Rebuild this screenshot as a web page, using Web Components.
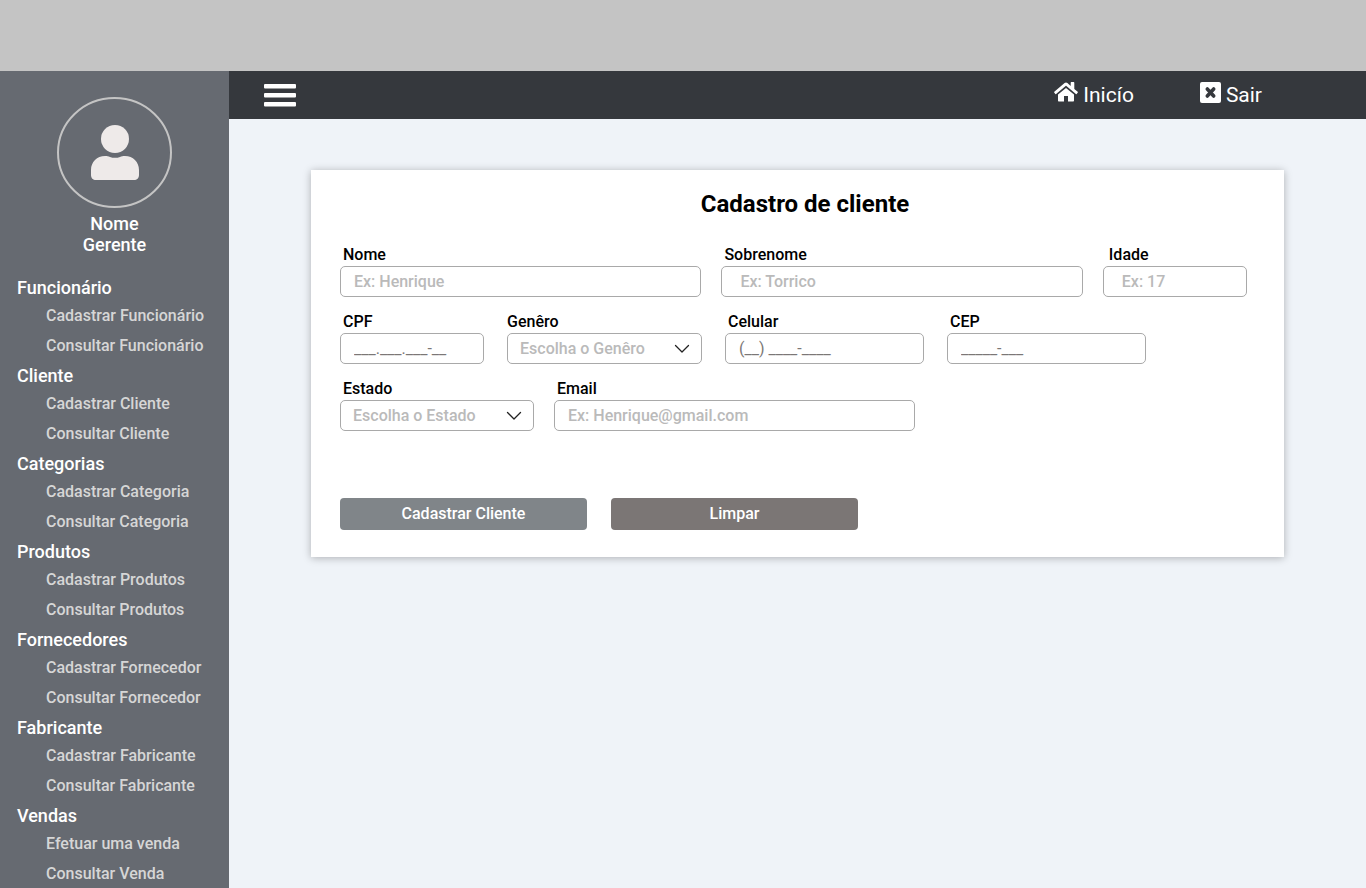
<!DOCTYPE html>
<html lang="pt-BR">
<head>
<meta charset="utf-8">
<meta name="viewport" content="width=device-width, initial-scale=1">
<title>Cadastro de cliente</title>
<style>
  html, body { height: 100%; }
  body {
    margin: 0;
    background: #eff3f8;
    color: #000;
    font: 500 16px/20px Roboto, "Liberation Sans", sans-serif;
  }
</style>
</head>
<body>
<app-shell>
  <side-menu slot="menu" name="Nome" role-name="Gerente">
    <menu-group heading="Funcionário" items="Cadastrar Funcionário|Consultar Funcionário"></menu-group>
    <menu-group heading="Cliente" items="Cadastrar Cliente|Consultar Cliente"></menu-group>
    <menu-group heading="Categorias" items="Cadastrar Categoria|Consultar Categoria"></menu-group>
    <menu-group heading="Produtos" items="Cadastrar Produtos|Consultar Produtos"></menu-group>
    <menu-group heading="Fornecedores" items="Cadastrar Fornecedor|Consultar Fornecedor"></menu-group>
    <menu-group heading="Fabricante" items="Cadastrar Fabricante|Consultar Fabricante"></menu-group>
    <menu-group heading="Vendas" items="Efetuar uma venda|Consultar Venda"></menu-group>
  </side-menu>
  <top-bar slot="bar"></top-bar>
  <form-card heading="Cadastro de cliente">
    <form-row layout="names">
      <form-field label="Nome" placeholder="Ex: Henrique"></form-field>
      <form-field label="Sobrenome" placeholder="Ex: Torrico" inset></form-field>
      <form-field label="Idade" placeholder="Ex: 17" inset indent></form-field>
    </form-row>
    <form-row layout="documents">
      <form-field label="CPF" placeholder="___.___.___-__" mask></form-field>
      <select-field label="Genêro" placeholder="Escolha o Genêro" options="Feminino|Masculino|Outro" flush></select-field>
      <form-field label="Celular" placeholder="(__) ____-____" mask></form-field>
      <form-field label="CEP" placeholder="_____-___" mask></form-field>
    </form-row>
    <form-row layout="contact">
      <select-field label="Estado" placeholder="Escolha o Estado" options="Paraná|Rio de Janeiro|São Paulo"></select-field>
      <form-field label="Email" type="email" placeholder="Ex: Henrique@gmail.com"></form-field>
    </form-row>
    <action-button slot="actions">Cadastrar Cliente</action-button>
    <action-button slot="actions" tone="muted">Limpar</action-button>
  </form-card>
</app-shell>

<script>
class BaseElement extends HTMLElement {
  connectedCallback() {
    if (this.shadowRoot) return;
    const template = document.createElement('template');
    template.innerHTML = '<style>*{box-sizing:border-box}</style>' + this.render();
    this.attachShadow({ mode: 'open' }).append(template.content.cloneNode(true));
  }
  attr(name, fallback = '') { return this.getAttribute(name) || fallback; }
  list(name) { return this.attr(name).split('|').filter(Boolean); }
}

customElements.define('app-shell', class extends BaseElement {
  render() {
    return `<style>
      :host { display: flex; flex-direction: column; height: 100vh; }
      .banner { flex: none; height: 71px; background: #c4c4c4; }
      .body { flex: 1; display: flex; min-height: 0; }
      .content { flex: 1; display: flex; flex-direction: column; min-width: 0; overflow-y: auto; }
      main { padding: 51px 82px; }
    </style>
    <div class="banner"></div>
    <div class="body">
      <slot name="menu"></slot>
      <div class="content"><slot name="bar"></slot><main><slot></slot></main></div>
    </div>`;
  }
});

customElements.define('side-menu', class extends BaseElement {
  render() {
    return `<style>
      :host { display: block; flex: none; box-sizing: border-box; width: 229px; background: #666a71;
              color: #fff; padding-top: 26px; overflow-y: auto; scrollbar-width: none; }
      .profile { display: flex; flex-direction: column; align-items: center; gap: 5px;
                 text-align: center; font-size: 18px; line-height: 21px; margin-bottom: 20px; }
      .profile svg { display: block; }
      p { margin: 0; }
      nav { display: grid; gap: 2px; }
    </style>
    <div class="profile">
      <svg width="115" height="111" viewBox="0 0 115 111" aria-hidden="true">
        <ellipse cx="57.5" cy="55.5" rx="56.5" ry="54.5" fill="none" stroke="#c4c4c4" stroke-width="2"/>
        <g fill="#eeeae9">
          <circle cx="58" cy="42" r="14"/>
          <path d="M48 59c2 0 3.500 .3 5 .9 3 1.200 7 1.200 10 0 1.500-.6 3-.9 5-.9 8 0 14 6 14 14v5c0 3-2 5-5 5H39c-3 0-5-2-5-5v-5c0-8 6-14 14-14z"/>
        </g>
      </svg>
      <div><p>${this.attr('name')}</p><p>${this.attr('role-name')}</p></div>
    </div>
    <nav><slot></slot></nav>`;
  }
});

customElements.define('menu-group', class extends BaseElement {
  render() {
    return `<style>
      :host { display: block; }
      h2 { margin: 0; padding-left: 17px; font-size: 18px; line-height: 26px; font-weight: 500; color: #fff; }
      ul { margin: 0; padding: 0 0 0 46px; list-style: none; }
      li { line-height: 30px; white-space: nowrap; }
      a { color: #d6d6d6; text-decoration: none; }
      a:hover { color: #fff; }
    </style>
    <h2>${this.attr('heading')}</h2>
    <ul>${this.list('items').map(item => `<li><a href="#">${item}</a></li>`).join('')}</ul>`;
  }
});

customElements.define('top-bar', class extends BaseElement {
  render() {
    return `<style>
      :host { display: flex; flex: none; box-sizing: border-box; justify-content: space-between; align-items: center;
              height: 48px; padding: 0 104px 0 35px; background: #35383d; color: #fff; }
      svg { display: block; }
      button { padding: 0; border: 0; background: none; color: inherit; cursor: pointer; }
      nav { display: flex; gap: 66px; }
      a { display: flex; gap: 5px; color: inherit; text-decoration: none; font-size: 21px; line-height: 26px; font-weight: 400; }
    </style>
    <button type="button" aria-label="Menu">
      <svg width="32" height="24" viewBox="0 0 32 24" fill="#fff"><rect y="1" width="32" height="4.500" rx="1"/><rect y="10" width="32" height="4.500" rx="1"/><rect y="19" width="32" height="4.500" rx="1"/></svg>
    </button>
    <nav>
      <a href="#"><svg width="24" height="20" viewBox="0 0 24 20" fill="#fff" aria-hidden="true">
        <path d="M12 5.900 4 12.500V18.500c0 .6.400 1 1 1h5v-5.500h4v5.500h5c.6 0 1-.4 1-1V12.500z"/>
        <path d="M23.700 9.700 20.300 6.900V.7c0-.4-.3-.6-.6-.6h-2.400c-.4 0-.6.200-.6.600V3.900L13.400 1C12.500.3 11.500.3 10.600 1L.3 9.700c-.3.200-.3.600-.1.900l1.100 1.300c.2.300.6.300.8.100L11.600 4c.3-.2.600-.2.800 0l9.500 8c.3.200.6.200.8-.1l1.100-1.300c.2-.3.200-.7-.1-.9z"/>
      </svg>Inicío</a>
      <a href="#"><svg width="21" height="21" viewBox="0 0 21 21" aria-hidden="true">
        <rect width="21" height="21" rx="2" fill="#fff"/>
        <path d="m7.300 7 6.400 7M13.700 7l-6.400 7" fill="none" stroke="#35383d" stroke-width="3.600" stroke-linecap="round"/>
      </svg>Sair</a>
    </nav>`;
  }
});

customElements.define('form-card', class extends BaseElement {
  render() {
    return `<style>
      :host { display: block; background: #fff; padding: 20px 37px 27px 29px; box-shadow: 0 1px 8px rgba(0,0,0,.28); }
      h1 { margin: 0 0 27px; padding-left: 23px; text-align: center; font-size: 24px; line-height: 28px; font-weight: 700; }
      .rows { display: grid; gap: 15px; }
      .actions { display: grid; grid-template-columns: 247fr 247fr 365fr; gap: 24px; margin-top: 67px; }
    </style>
    <form>
      <h1>${this.attr('heading')}</h1>
      <div class="rows"><slot></slot></div>
      <div class="actions"><slot name="actions"></slot></div>
    </form>`;
  }
});

customElements.define('form-row', class extends BaseElement {
  render() {
    return `<style>
      :host { display: grid; gap: 20px; }
      :host([layout="names"]) { grid-template-columns: 361fr 361fr 144fr; }
      :host([layout="documents"]) { grid-template-columns: 144fr 195fr 199fr 199fr 78fr; gap: 23px; }
      :host([layout="contact"]) { grid-template-columns: 194fr 361fr 312fr; }
    </style><slot></slot>`;
  }
});

const fieldStyle = `
  :host { display: grid; gap: 1px; min-width: 0; }
  label { padding-left: 3px; line-height: 20px; }
  input, select { display: block; width: 100%; height: 31px; margin: 0; padding: 0 13px; border: 1px solid #a9a9a9;
    border-radius: 5px; background: #fff; color: #000; font: inherit; outline: none; }
  input:focus, select:focus { border-color: #35383d; }
`;

customElements.define('form-field', class extends BaseElement {
  render() {
    return `<style>${fieldStyle}
      input::placeholder { color: #bababa; opacity: 1; }
      :host([inset]) input { padding: 0 18px; }
      :host([indent]) label { padding-left: 6px; }
      :host([mask]) input { font-weight: 400; }
      :host([mask]) input::placeholder { color: #7b7776; }
    </style>
    <label for="control">${this.attr('label')}</label>
    <input id="control" type="${this.attr('type', 'text')}" placeholder="${this.attr('placeholder')}">`;
  }
});

customElements.define('select-field', class extends BaseElement {
  render() {
    return `<style>${fieldStyle}
      :host([flush]) label { padding-left: 0; }
      .box { display: grid; align-items: center; }
      .box > * { grid-area: 1 / 1; }
      select { appearance: none; padding: 0 12px; color: #bababa; }
      option { color: #000; }
      svg { justify-self: end; margin-right: 12px; pointer-events: none; }
    </style>
    <label for="control">${this.attr('label')}</label>
    <div class="box">
      <select id="control"><option>${this.attr('placeholder')}</option>${this.list('options').map(o => `<option>${o}</option>`).join('')}</select>
      <svg width="16" height="16" viewBox="0 0 16 16" aria-hidden="true"><path d="m1.500 4.500 6.500 6.500L14.500 4.500" fill="none" stroke="#222" stroke-width="1.300" stroke-linecap="round" stroke-linejoin="round"/></svg>
    </div>`;
  }
});

customElements.define('action-button', class extends BaseElement {
  render() {
    return `<style>
      :host { display: block; }
      button { display: block; width: 100%; height: 32px; padding: 0; border: 0; border-radius: 4px;
               background: #808589; color: #fff; font: inherit; cursor: pointer; }
      :host([tone="muted"]) button { background: #7b7675; }
    </style>
    <button type="button"><slot></slot></button>`;
  }
});
</script>
</body>
</html>
